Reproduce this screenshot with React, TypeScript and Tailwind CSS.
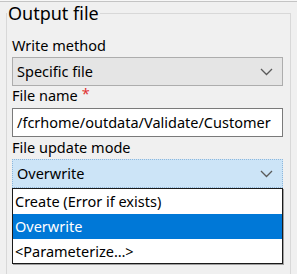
import React from "react";

function Chevron() {
  return (
    <svg width="13" height="8" viewBox="0 0 13 8" className="shrink-0">
      <path d="M1 1 L6.5 6.5 L12 1" fill="none" stroke="#5a5a5a" strokeWidth="1.3" />
    </svg>
  );
}

export default function App() {
  return (
    <div
      className="w-[297px] h-[274px] bg-[#f0f0f0] overflow-hidden text-[14.5px] leading-none text-[#000]"
      style={{ fontFamily: '"Noto Sans", "Open Sans", sans-serif' }}
    >
      <div className="h-[1px] bg-[#f7f7f7]" />
      <div className="h-[1px] bg-[#c4c4c4]" />
      <div className="pl-[6px] pr-[6px]">
        <fieldset className="relative border border-[#d8d8d8] h-[300px] px-[5px] pt-[11px]">
          <legend className="-ml-[5px] px-[1px] leading-[22px] text-[18px]">Output file</legend>
          <div className="flex flex-col">
            <div className="h-[20px] flex items-center">Write method</div>
            <div className="mt-[2px] h-[29px] w-[271px] border border-[#adadad] bg-[#e5e5e5] flex items-center justify-between pl-[4px] pr-[9px]">
              <span>Specific file</span>
              <Chevron />
            </div>
            <div className="h-[18px] flex items-center">
              File name <span className="text-[#e03030] ml-[4px] relative -top-[2px]">*</span>
            </div>
            <div className="mt-[4px] h-[29px] w-[271px] border border-[#7a7a7a] bg-white flex items-center pl-[4px] overflow-hidden whitespace-nowrap">
              /fcrhome/outdata/Validate/Customer
            </div>
            <div className="h-[20px] flex items-center">File update mode</div>
            <div className="relative mt-[2px]">
              <div className="h-[29px] w-[271px] border border-dotted border-[#8fb8dc] bg-[#cce4f7] flex items-center justify-between pl-[4px] pr-[9px]">
                <span>Overwrite</span>
                <Chevron />
              </div>
              <div className="absolute left-0 top-[29px] w-[271px] border border-[#1a1a1a] bg-white flex flex-col shadow-[1px_1px_0_#a0a0a0]">
                <div className="h-[25px] flex items-center pl-[2px]">Create (Error if exists)</div>
                <div className="h-[25px] flex items-center pl-[2px] bg-[#0078d7] text-white">Overwrite</div>
                <div className="h-[24px] flex items-center pl-[2px]">&lt;Parameterize…&gt;</div>
              </div>
            </div>
          </div>
        </fieldset>
      </div>
    </div>
  );
}
